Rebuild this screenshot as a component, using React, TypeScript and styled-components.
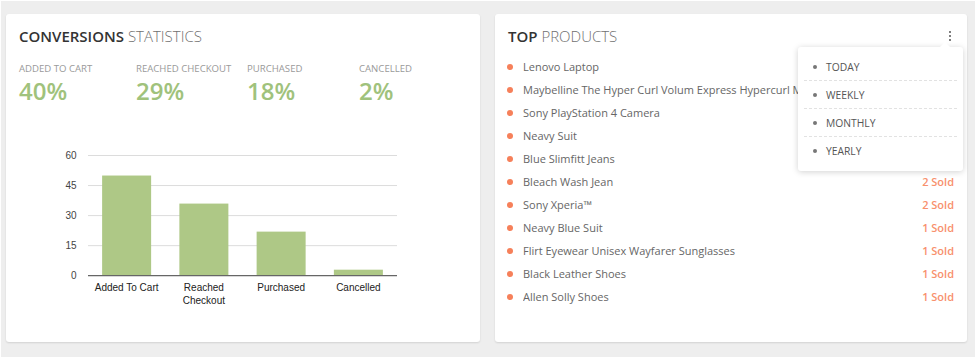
import React from "react";
import styled, { createGlobalStyle } from "styled-components";

const Global = createGlobalStyle`
  html, body { margin: 0; padding: 0; background: #fff; }
  body { font-family: "Open Sans", "Noto Sans", sans-serif; }
`;

const Page = styled.div`
  margin: 1px 2px 0 1px;
  background: #eeeeee;
  height: 356px;
  box-sizing: border-box;
  padding: 13px 8px 0 5px;
  display: grid;
  grid-template-columns: 474px 472px;
  column-gap: 15px;
  align-items: start;
`;

const Card = styled.section`
  position: relative;
  background: #fff;
  border-radius: 3px;
  height: 328px;
  box-shadow: 0 1px 2px rgba(0, 0, 0, 0.12);
  box-sizing: border-box;
`;

const Header = styled.div`
  display: flex;
  align-items: center;
  justify-content: space-between;
  padding: 11px 13px 0 13px;
`;

const Title = styled.h2`
  margin: 0;
  font-size: 15px;
  line-height: 22px;
  font-weight: 300;
  color: #707070;
  & > b {
    font-weight: 600;
    color: #333;
  }
`;

const Stats = styled.div`
  display: grid;
  grid-template-columns: 117px 111px 112px 1fr;
  padding: 16px 13px 0 13px;
`;

const Stat = styled.div`
  display: flex;
  flex-direction: column;
`;

const StatLabel = styled.span`
  font-size: 9.6px;
  line-height: 12px;
  color: #9a9a9a;
  text-transform: uppercase;
  white-space: nowrap;
`;

const StatValue = styled.span`
  margin-top: 2px;
  font-size: 24px;
  line-height: 28px;
  font-weight: 600;
  color: #a0c27c;
`;

const ChartSvg = styled.svg`
  display: block;
  font-family: "Liberation Sans", Arial, sans-serif;
`;

const List = styled.ul`
  list-style: none;
  margin: 0;
  padding: 8px 13px 0 12px;
`;

const Row = styled.li`
  display: flex;
  align-items: center;
  height: 23px;
  font-size: 11px;
  color: #666;
`;

const Dot = styled.span`
  width: 6px;
  height: 6px;
  border-radius: 50%;
  background: #f6805a;
  flex: none;
  margin-right: 10px;
`;

const Name = styled.span`
  flex: 1;
  white-space: nowrap;
  overflow: hidden;
`;

const Sold = styled.span`
  font-weight: 600;
  color: #f8906d;
  margin-left: 12px;
`;

const Kebab = styled.button`
  border: 0;
  background: none;
  padding: 0;
  margin-right: 3px;
  display: flex;
  flex-direction: column;
  gap: 1.5px;
  cursor: pointer;
  & > i {
    display: block;
    width: 2.5px;
    height: 2.5px;
    background: #555;
    border-radius: 50%;
  }
`;

const Menu = styled.ul`
  position: absolute;
  left: 303px;
  top: 33px;
  width: 165px;
  margin: 0;
  list-style: none;
  padding: 6px 6px;
  box-sizing: border-box;
  background: #fff;
  border-radius: 3px;
  box-shadow: 0 1px 6px rgba(0, 0, 0, 0.18);
  &::before {
    content: "";
    position: absolute;
    top: -5px;
    right: 13px;
    border-left: 5px solid transparent;
    border-right: 5px solid transparent;
    border-bottom: 5px solid #fff;
  }
`;

const MenuItem = styled.li<{ $last?: boolean }>`
  display: flex;
  align-items: center;
  height: 27px;
  padding-left: 9px;
  font-size: 10.3px;
  color: #555;
  text-transform: uppercase;
  border-bottom: 1px dashed ${(p) => (p.$last ? "transparent" : "#e2e2e2")};
  &::before {
    content: "";
    width: 4px;
    height: 4px;
    border-radius: 50%;
    background: #777;
    margin-right: 9px;
  }
`;

const stats = [
  { label: "Added to cart", value: "40%" },
  { label: "Reached checkout", value: "29%" },
  { label: "Purchased", value: "18%" },
  { label: "Cancelled", value: "2%" },
];

const bars = [
  { label: ["Added To Cart"], v: 50 },
  { label: ["Reached", "Checkout"], v: 36 },
  { label: ["Purchased"], v: 22 },
  { label: ["Cancelled"], v: 3 },
];

const products = [
  { name: "Lenovo Laptop", sold: 6 },
  { name: "Maybelline The Hyper Curl Volum Express Hypercurl Mascara", sold: 4 },
  { name: "Sony PlayStation 4 Camera", sold: 3 },
  { name: "Neavy Suit", sold: 3 },
  { name: "Blue Slimfitt Jeans", sold: 3 },
  { name: "Bleach Wash Jean", sold: 2 },
  { name: "Sony Xperia™", sold: 2 },
  { name: "Neavy Blue Suit", sold: 1 },
  { name: "Flirt Eyewear Unisex Wayfarer Sunglasses", sold: 1 },
  { name: "Black Leather Shoes", sold: 1 },
  { name: "Allen Solly Shoes", sold: 1 },
];

function Chart() {
  const x0 = 82;
  const x1 = 391;
  const base = 170.7;
  const top = 50.5;
  const scale = (base - top) / 60;
  const slot = (x1 - x0) / 4;
  const bw = 49;
  return (
    <ChartSvg width={474} height={205} viewBox="0 0 474 205">
      {[60, 45, 30, 15].map((t) => {
        const y = base - t * scale;
        return (
          <g key={t}>
            <line x1={x0} x2={x1} y1={y} y2={y} stroke="#dcdcdc" strokeWidth={1} />
            <text x={70.5} y={y + 3.5} fontSize={10} fill="#444" textAnchor="end">
              {t}
            </text>
          </g>
        );
      })}
      {bars.map((b, i) => {
        const cx = x0 + slot * (i + 0.5);
        const h = b.v * scale;
        return (
          <g key={i}>
            <rect x={cx - bw / 2} y={base - h} width={bw} height={h} fill="#aec886" />
            {b.label.map((l, j) => (
              <text key={j} x={cx} y={186 + j * 13} fontSize={10} fill="#222" textAnchor="middle">
                {l}
              </text>
            ))}
          </g>
        );
      })}
      <line x1={x0} x2={x1} y1={base} y2={base} stroke="#666" strokeWidth={1.3} />
      <text x={70.5} y={base + 3.5} fontSize={10} fill="#444" textAnchor="end">
        0
      </text>
    </ChartSvg>
  );
}

export default function App() {
  return (
    <>
      <Global />
      <Page>
        <Card>
          <Header>
            <Title>
              <b>CONVERSIONS</b> STATISTICS
            </Title>
          </Header>
          <Stats>
            {stats.map((s) => (
              <Stat key={s.label}>
                <StatLabel>{s.label}</StatLabel>
                <StatValue>{s.value}</StatValue>
              </Stat>
            ))}
          </Stats>
          <Chart />
        </Card>
        <Card>
          <Header>
            <Title>
              <b>TOP</b> PRODUCTS
            </Title>
            <Kebab aria-label="menu">
              <i />
              <i />
              <i />
            </Kebab>
          </Header>
          <List>
            {products.map((p) => (
              <Row key={p.name}>
                <Dot />
                <Name>{p.name}</Name>
                <Sold>{p.sold} Sold</Sold>
              </Row>
            ))}
          </List>
          <Menu>
            {["Today", "Weekly", "Monthly", "Yearly"].map((m, i) => (
              <MenuItem key={m} $last={i === 3}>
                {m}
              </MenuItem>
            ))}
          </Menu>
        </Card>
      </Page>
    </>
  );
}
